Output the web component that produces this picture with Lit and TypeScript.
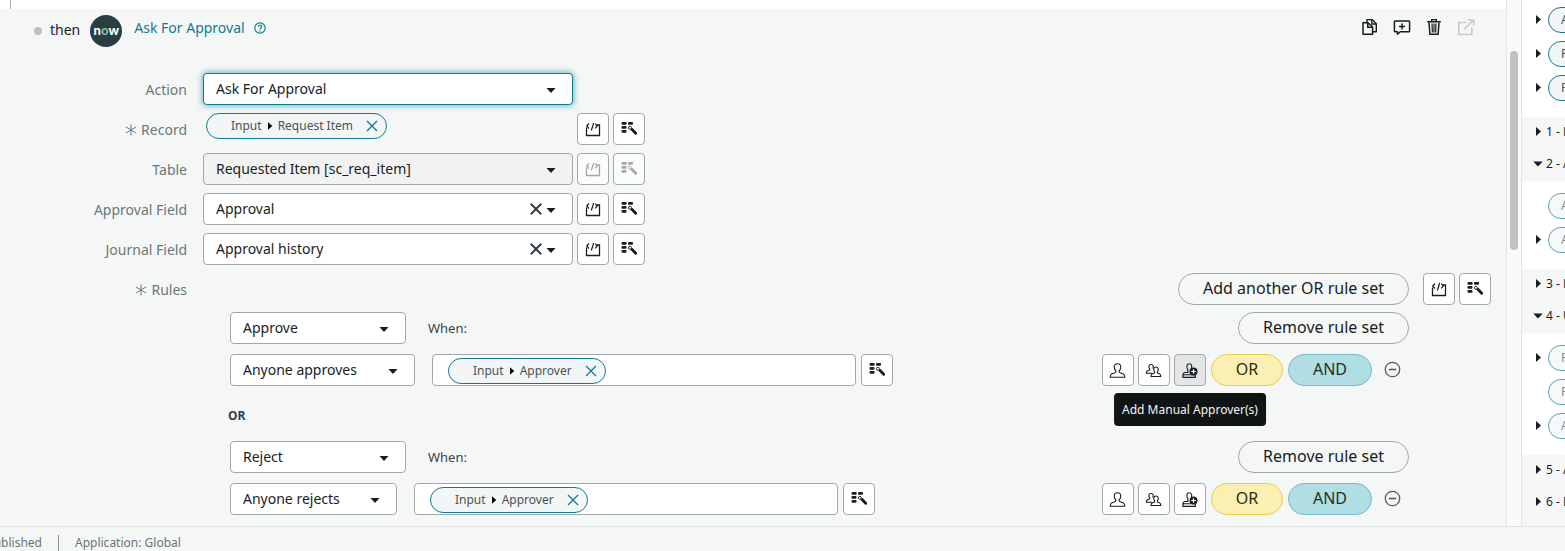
import { LitElement, html, css, svg, nothing, TemplateResult } from "lit";
import { customElement } from "lit/decorators.js";
import { classMap } from "lit/directives/class-map.js";

const icon = (size: number, body: unknown, name = "") =>
  html`<svg class="icon ${name}" width=${size} height=${size} viewBox="0 0 ${size} ${size}" fill="none"
    stroke="currentColor" aria-hidden="true">${body}</svg>`;

const scriptIcon = () => icon(16, svg`
  <path d="M1.500 6.500v8h13v-10.500H11.500" stroke-width="1.300"/>
  <path d="M4 2.500 1.700 5 4 7.500M6.300 9.500 8.700 2M10.200 2.700l2.100 2.300-2.100 2.300" stroke-width="1.200"/>`);

const wandIcon = () => icon(16, svg`
  <g fill="currentColor" stroke="none">
    <rect x=".5" y="1" width="5.200" height="2.800" rx="1"/><rect x="7" y="1" width="5" height="2.800" rx="1"/>
    <rect x=".5" y="5" width="5" height="2.800" rx="1"/><rect x=".5" y="9" width="5" height="2.800" rx="1"/>
  </g>
  <path d="M10.800 8.300l3.900 4" stroke-width="2.900" stroke-linecap="round"/>
  <circle cx="8.900" cy="6.800" r="1.500" fill="#fff" stroke-width=".9"/>`);

const helpIcon = () => icon(12, svg`
  <circle cx="6" cy="6" r="5.200" stroke-width="1.200"/>
  <path d="M4.300 4.900c0-2.500 3.500-2.400 3.500-.3C7.800 5.800 6 5.700 6 7.200" stroke-width="1.200"/>
  <circle cx="6" cy="8.900" r=".75" fill="currentColor" stroke="none"/>`);

const copyIcon = () => icon(18, svg`
  <path d="M6 4.500V1.600h5L15.300 5.800v8h-3.500" stroke-width="1.400" stroke-linejoin="round"/>
  <path d="M10.800 1.800v4.200h4.300" stroke-width="1.300"/>
  <path d="M2 4.800h5L11.600 9v7.300H2z" stroke-width="1.500" stroke-linejoin="round"/>
  <path d="M6.800 5v4.300h4.500" stroke-width="1.600"/>`);

const commentIcon = () => icon(18, svg`
  <path d="M2.200 3h13.600q.8 0 .8.800v9.200q0 .8-.8.800H7.300L4.500 16.300v-2.500H2.200q-.8 0-.8-.8V3.800Q1.400 3 2.200 3z"
    stroke-width="1.500" stroke-linejoin="round"/>
  <path d="M9 5.500v6M6 8.500h6" stroke-width="1.500"/>`);

const trashIcon = () => icon(18, svg`
  <path d="M2.200 3.700h13.600M6.700 3.500V1.600h4.600v1.900" stroke-width="1.400"/>
  <path d="M4 4.500l.9 11.800h8.200L14 4.500" stroke-width="1.500" stroke-linejoin="round"/>
  <path d="M7 5.500l.4 9M9 5.500v9M11 5.500l-.4 9" stroke-width="1.200"/>`);

const openIcon = () => icon(18, svg`
  <path d="M9.500 4.500H1.800v12h13V9.500" stroke-width="1.600"/>
  <path d="M7 11.500 16 2.600M11 1.900h5.800v5.600" stroke-width="1.500"/>`);

const personIcon = () => icon(18, svg`
  <path d="M8.500 2.700c2.500 0 3.400 1.500 3.200 3.800-.1 1.500-.7 2.500-1.500 3.200v1.500c1 .9 3.500 1.100 4.600 2.100.9.800 1 1.600 1 3H1.200c0-1.400.1-2.200 1-3 1.100-1 3.600-1.200 4.600-2.100V9.700C6 9 5.400 8 5.300 6.500 5.100 4.200 6 2.700 8.500 2.700z"
    stroke-width="1.100"/>`);

const peopleIcon = () => icon(18, svg`
  <path d="M7 12.300H1.400c0-1.400.2-2.100 1.100-2.500l2.200-.9V7.800C3.300 6.300 3.500 3.500 6 3.500s2.800 2.400 1.700 4.100" stroke-width="1.100"/>
  <path d="M11 6c2.700 0 2.700 3.200 1.400 4.800v1.100l2 .9c1 .4 1.400 1 1.400 2.700H6c0-1.700.4-2.300 1.400-2.700l2.200-.9v-1.100C8.300 9.200 8.300 6 11 6z"
    stroke-width="1.100"/>`);

const stampIcon = () => icon(18, svg`
  <path d="M6.800 11V8.500C5.500 7.300 5.300 2.800 8 2.800s3.200 2.400 2.400 4.200" stroke-width="1.100"/>
  <path d="M7.500 11.500H3.600q-1.600.3-1.600 2.300h11" stroke-width="1.100"/>
  <path d="M2 13.800v2.500h12.300v-2.300" stroke-width="1.200"/>
  <circle cx="12.500" cy="10.500" r="4" fill="currentColor" stroke="none"/>
  <path d="M12.500 8.200v4.600M10.200 10.500h4.600" stroke="#fff" stroke-width="1.200"/>`);

const minusIcon = () => icon(18, svg`
  <circle cx="8.500" cy="8.500" r="7.200" stroke-width="1.300"/><path d="M4.800 8.500h7.400" stroke-width="1.600"/>`);

const crossIcon = () => icon(12, svg`<path d="M1 1l10 10M11 1 1 11" stroke-width="1.300"/>`);
const clearIcon = () => icon(12, svg`<path d="M.8.8l10.400 10.400M11.200.8.800 11.200" stroke-width="2"/>`);
const caretIcon = () => icon(10, svg`<path d="M.5 3h9L5 8z" fill="currentColor" stroke="none"/>`, "caret");
const asterisk = () => icon(12, svg`<path d="M6 .5v11M1 3l10 6M11 3 1 9" stroke-width="1"/>`);
const pointRight = () => icon(10, svg`<path d="M3 0v9l5-4.500z" fill="currentColor" stroke="none"/>`);
const pointSmall = () => icon(8, svg`<path d="M2 .3v7.400L6.300 4z" fill="currentColor" stroke="none"/>`, "dark");
const pointDown = () => icon(10, svg`<path d="M.3 2.500h9.400L5 7.500z" fill="currentColor" stroke="none"/>`);

interface Field { id: string; label: string; value: string; clear?: boolean; disabled?: boolean; tools?: boolean; focus?: boolean; }
interface RuleSet { id: string; verdict: string; who: string; size: string; hint?: boolean; }
interface Section { title?: string; open?: boolean; faint?: boolean; pills?: { text: string; expandable: boolean }[]; }

const fields: Field[] = [
  { id: "table", label: "Table", value: "Requested Item [sc_req_item]", disabled: true, tools: true },
  { id: "approval", label: "Approval Field", value: "Approval", clear: true, tools: true },
  { id: "journal", label: "Journal Field", value: "Approval history", clear: true, tools: true },
];

const ruleSets: RuleSet[] = [
  { id: "approve", verdict: "Approve", who: "Anyone approves", size: "wide", hint: true },
  { id: "reject", verdict: "Reject", who: "Anyone rejects", size: "narrow" },
];

const sections: Section[] = [
  { pills: [{ text: "A", expandable: true }, { text: "F", expandable: true }, { text: "F", expandable: true }] },
  { title: "1 - L" },
  { title: "2 - A", open: true, faint: true, pills: [{ text: "A", expandable: false }, { text: "A", expandable: true }] },
  { title: "3 - L" },
  { title: "4 - U", open: true, faint: true, pills: [{ text: "F", expandable: true }, { text: "F", expandable: false }, { text: "A", expandable: true }] },
  { title: "5 - A" },
  { title: "6 - L" },
];

@customElement("app-root")
export class AppRoot extends LitElement {
  static styles = css`
    :host { display: block; font-family: "Noto Sans", "Open Sans", sans-serif; font-size: 14px; line-height: 20px; color: #181d1f; }
    *, *::before { box-sizing: border-box; }
    button, select, input { font: inherit; color: inherit; margin: 0; padding: 0; }
    button { cursor: pointer; }
    .icon { display: block; flex: none; }
    .dark { color: #000; }

    .shell { display: grid; grid-template-rows: minmax(0, 1fr) auto; height: 100vh; overflow: hidden; background: #f5f7f7; }
    .body { display: grid; grid-template-columns: minmax(0, 1fr) 16px 43px; min-height: 0; }
    .flow { overflow: hidden; }
    .previous { height: 9px; padding-left: 10px; background: #fff; }
    .connector { height: 100%; border-left: 1px solid #a4a9aa; }

    .head { display: flex; align-items: center; padding: 6px 31px 0 34px; }
    .dot { width: 8px; height: 8px; border-radius: 50%; background: #bdc0c1; margin-right: 8px; }
    .then { margin-right: 10px; padding-bottom: 2px; }
    .badge { display: grid; place-content: center; width: 32px; height: 32px; margin-right: 12px; padding-bottom: 2px; border-radius: 50%;
      background: #293e40; color: #fff; font: 900 13px/16px Lato, sans-serif; }
    .badge-o { color: #81b5a1; }
    .name { display: flex; align-items: center; gap: 9px; flex: 1; padding-bottom: 6px; }
    .link { color: #127a8f; text-decoration: none; }
    .plain { display: grid; place-content: center; border: 0; background: none; }
    .teal { color: #127a8f; }
    .actions { display: flex; gap: 14px; padding-bottom: 8px; }
    .actions .plain { width: 18px; height: 18px; }
    .actions .plain:disabled { color: #c6c9c9; }

    .form { display: grid; gap: 8px; padding: 26px 15px 10px 0; }
    .row { display: grid; grid-template-columns: 187px minmax(0, 1fr); column-gap: 16px; }
    .label { display: flex; align-items: center; justify-content: flex-end; gap: 4px; height: 32px; padding-top: 2px; color: #6c7779; }
    .controls { display: flex; gap: 4px; }
    .slot { display: flex; flex: 0 1 370px; padding-left: 3px; }

    .picker { display: grid; grid-template: 32px / minmax(0, 1fr); align-items: center; }
    .picker > * { grid-area: 1 / 1; }
    .picker.full { flex: 0 1 370px; }
    .picker.verdict { width: 176px; }
    .picker.wide { width: 185px; }
    .picker.narrow { width: 167px; }
    .select { width: 100%; height: 32px; padding: 0 48px 0 12px; border: 1px solid #a2a8a8; border-radius: 4px; background: #fff;
      appearance: none; outline: 0; }
    .verdict .select, .wide .select, .narrow .select { padding-right: 24px; }
    .select:disabled { background: #f2f2f2; opacity: 1; }
    .select.active { border-color: #127a8f; box-shadow: 0 0 6px 1px rgba(18, 140, 160, .6); }
    .adorn { display: flex; align-items: center; gap: 4px; justify-self: end; padding-right: 17px; pointer-events: none; }
    .adorn .plain { pointer-events: auto; color: #343d47; }
    .adorn .caret { margin-top: 2px; }

    .tool { display: grid; place-content: center; flex: none; width: 32px; height: 32px; border: 1px solid #a2a8a8; border-radius: 4px; background: #fff; }
    .tool:disabled { background: #fafbfb; color: #a5a8a8; }
    .tool.hover { background: #e4e5e7; }

    .chip { display: flex; align-items: center; height: 26px; padding: 0 8px 0 24px; border: 1px solid #127a8f; border-radius: 13px;
      background: #f2f6f7; color: #485356; font-size: 12px; line-height: 16px; }
    .chip .icon { margin: 0 4px; }
    .chip .plain { margin-left: 13px; }
    .chip .plain .icon { margin: 0; }

    .rule-tools { display: flex; justify-content: flex-end; gap: 4px; }
    .pill { height: 32px; padding: 0 24px 2px; border: 1px solid #a2a8a8; border-radius: 16px; background: none; font-size: 16px; line-height: 22px; }
    .rule-tools .pill { margin-right: 10px; }
    .pill.or { width: 72px; padding: 0 0 2px; border-color: #e3cf52; background: #fbf0b2; color: #2c2c14; }
    .pill.and { width: 84px; padding: 0 0 2px; border-color: #74bccb; background: #b1dde4; color: #1f3023; }

    .rules { padding: 0 82px 0 230px; margin-top: -1px; }
    .line { display: flex; align-items: center; margin-bottom: 10px; }
    .when { margin-left: 22px; font-size: 13px; color: #3a4244; }
    .push { margin-left: auto; }
    .joiner { margin: 20px 0 15px -2px; font-size: 12px; font-weight: 700; color: #343d47; }
    .entry { display: flex; align-items: center; flex: 0 1 424px; height: 32px; margin: 0 5px 0 17px; padding: 1px 8px 0 15px;
      border: 1px solid #a2a8a8; border-radius: 4px; background: #fff; }
    .text { flex: 1; min-width: 0; border: 0; outline: 0; background: none; }
    .ops { display: flex; gap: 5px; margin-left: auto; }
    .group { display: flex; gap: 4px; }
    .hinted { position: relative; }
    .tooltip { position: absolute; top: 39px; left: 50%; z-index: 1; transform: translateX(-50%); padding: 8px; border-radius: 4px;
      background: #101415; color: #f3f4f4; font-size: 12px; line-height: 17px; white-space: nowrap; }
    .ops .plain { width: 32px; height: 32px; color: #575d5f; }

    .track { border: solid #e3e5e5; border-width: 0 1px; background: #fafafa; padding: 51px 3px 0; }
    .thumb { height: 199px; border-radius: 4px; background: #c1c1c1; }

    .data { overflow: hidden; background: #fff; font-size: 13px; }
    .title { display: flex; align-items: center; gap: 3px; width: 100%; height: 32px; padding: 0 0 3px 11px; background: #f5f7f7;
      white-space: nowrap; border: 0; text-align: left; font-size: 12px; }
    .open + .pills { padding-top: 12px; }
    .pills { display: grid; gap: 8px; padding: 7px 0 16px 11px; }
    .pill-row { display: flex; align-items: center; gap: 5px; }
    .spacer { flex: none; width: 10px; height: 10px; }
    .datum { flex: none; width: 120px; height: 26px; padding: 4px 12px; border: 1px solid #127a8f; border-radius: 13px; background: #f2f6f7;
      color: #485356; font-size: 12px; line-height: 16px; }
    .faint .datum { border-color: #5c9fae; background: #f6f9fa; color: #858c8e; }
    .rest { height: 32px; background: #f5f7f7; }

    .status { display: flex; height: 25px; padding-top: 6px; border-top: 1px solid #dfe2e2; font-size: 12px; color: #6a7476; }
    .state { display: flex; justify-content: flex-end; width: 42px; overflow: hidden; }
    .app { margin: 2px 0 0 16px; padding-left: 16px; border-left: 1px solid #8b9293; }
    .app-text { display: block; margin-top: -2px; }
  `;

  private select(id: string, value: string, size: string, opts: Partial<Field> = {}, label?: string) {
    return html`<div class="picker ${size}">
      <select class=${classMap({ select: true, active: !!opts.focus })} id=${id} ?disabled=${opts.disabled}
        aria-label=${label ?? nothing}><option>${value}</option></select>
      <span class="adorn">
        ${opts.clear ? html`<button class="plain" aria-label="Clear">${clearIcon()}</button>` : nothing}
        ${caretIcon()}
      </span>
    </div>`;
  }

  private tools(disabled = false) {
    return html`
      <button class="tool" aria-label="Toggle scripting" ?disabled=${disabled}>${scriptIcon()}</button>
      <button class="tool" aria-label="Pick data" ?disabled=${disabled}>${wandIcon()}</button>`;
  }

  private chip(value: string) {
    return html`<span class="chip">Input ${pointSmall()} ${value}
      <button class="plain teal" aria-label="Remove">${crossIcon()}</button></span>`;
  }

  private field(f: Field) {
    return html`<div class="row">
      <label class="label" for=${f.id}>${f.label}</label>
      <div class="controls">
        ${this.select(f.id, f.value, "full", f)}
        ${f.tools ? this.tools(f.disabled) : nothing}
      </div>
    </div>`;
  }

  private ruleSet(r: RuleSet): TemplateResult {
    return html`
      <div class="line">
        ${this.select(r.id, r.verdict, "verdict")}
        <label class="when" for=${r.id}>When:</label>
        <button class="pill push">Remove rule set</button>
      </div>
      <div class="line">
        ${this.select(r.id + "-who", r.who, r.size, {}, "Approval condition")}
        <div class="entry">${this.chip("Approver")}<input class="text" aria-label="Approvers" /></div>
        <button class="tool" aria-label="Pick data">${wandIcon()}</button>
        <div class="ops">
          <div class="group">
            <button class="tool" aria-label="Add users">${personIcon()}</button>
            <button class="tool" aria-label="Add groups">${peopleIcon()}</button>
            <div class="hinted">
              <button class=${classMap({ tool: true, hover: !!r.hint })} aria-label="Add Manual Approver(s)">${stampIcon()}</button>
              ${r.hint ? html`<div class="tooltip" role="tooltip">Add Manual Approver(s)</div>` : nothing}
            </div>
          </div>
          <button class="pill or">OR</button>
          <button class="pill and">AND</button>
          <button class="plain" aria-label="Remove condition">${minusIcon()}</button>
        </div>
      </div>`;
  }

  private section(s: Section) {
    return html`
      ${s.title ? html`<button class=${classMap({ title: true, open: !!s.open })}>${s.open ? pointDown() : pointRight()}${s.title}</button>` : nothing}
      ${s.pills ? html`<div class=${classMap({ pills: true, faint: !!s.faint })}>
        ${s.pills.map((p) => html`<div class="pill-row">
          ${p.expandable ? pointRight() : html`<span class="spacer"></span>`}
          <span class="datum">${p.text}</span>
        </div>`)}
      </div>` : nothing}`;
  }

  render() {
    return html`<div class="shell">
      <div class="body">
        <main class="flow">
          <div class="previous"><div class="connector"></div></div>
          <header class="head">
            <span class="dot"></span>
            <span class="then">then</span>
            <span class="badge"><span>n<span class="badge-o">o</span>w</span></span>
            <div class="name">
              <a class="link" href="#">Ask For Approval</a>
              <button class="plain teal" aria-label="Help">${helpIcon()}</button>
            </div>
            <div class="actions">
              <button class="plain" aria-label="Duplicate">${copyIcon()}</button>
              <button class="plain" aria-label="Add comment">${commentIcon()}</button>
              <button class="plain" aria-label="Delete">${trashIcon()}</button>
              <button class="plain" aria-label="Open" disabled>${openIcon()}</button>
            </div>
          </header>
          <div class="form">
            ${this.field({ id: "action", label: "Action", value: "Ask For Approval", focus: true })}
            <div class="row" role="group" aria-labelledby="record-label">
              <span class="label" id="record-label">${asterisk()}Record</span>
              <div class="controls"><div class="slot">${this.chip("Request Item")}</div>${this.tools()}</div>
            </div>
            ${fields.map((f) => this.field(f))}
            <div class="row" role="group" aria-labelledby="rules-label">
              <span class="label" id="rules-label">${asterisk()}Rules</span>
              <div class="rule-tools"><button class="pill">Add another OR rule set</button>${this.tools()}</div>
            </div>
            <div class="rules">
              ${ruleSets.map((r, i) => html`${i ? html`<div class="joiner">OR</div>` : nothing}${this.ruleSet(r)}`)}
            </div>
          </div>
        </main>
        <div class="track"><div class="thumb"></div></div>
        <aside class="data">${sections.map((s) => this.section(s))}<div class="rest"></div></aside>
      </div>
      <footer class="status">
        <span class="state">Published</span>
        <span class="app"><span class="app-text">Application: Global</span></span>
      </footer>
    </div>`;
  }
}
